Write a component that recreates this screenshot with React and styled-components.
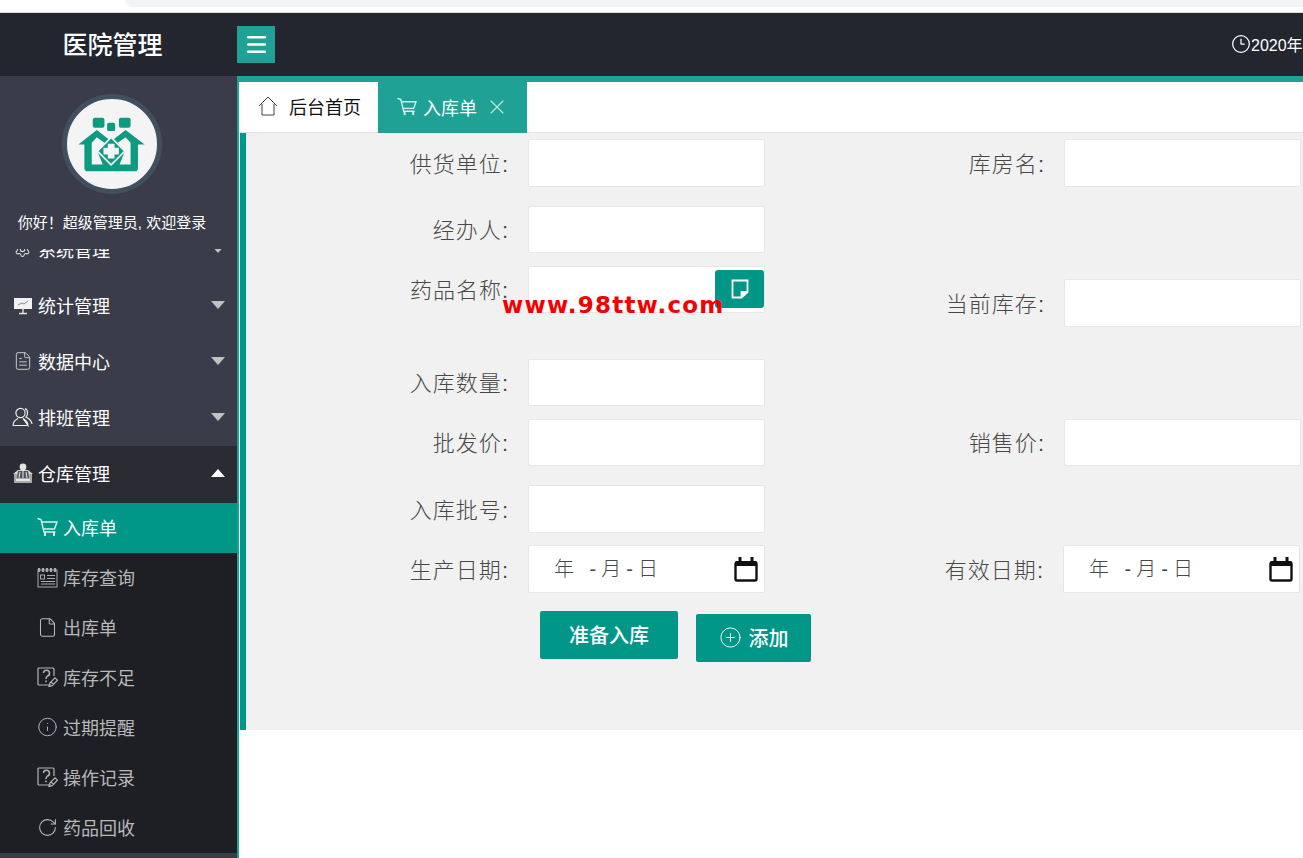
import styled, { createGlobalStyle } from "styled-components";
import { Clock3, File, FileText, Info, Menu as MenuIcon, RotateCw, Settings, X, CirclePlus } from "lucide-react";

const GlobalStyle = createGlobalStyle`
  html, body {
    margin: 0;
    padding: 0;
    height: 100%;
    overflow: hidden;
    background: #fff;
  }
  body {
    font-family: "Liberation Sans", "Noto Sans CJK SC", sans-serif;
  }
  * { box-sizing: border-box; }
`;

const Page = styled.div`
  width: 1303px;
  height: 858px;
  display: flex;
  flex-direction: column;
  overflow: hidden;
`;

const BrowserStrip = styled.div`
  height: 13px;
  flex: none;
  border-bottom: 1px solid #dcdcdc;
  background: #fff;
  padding-left: 125px;
`;

const BrowserStripShape = styled.div`
  height: 7px;
  background: #f1f3f4;
  border-bottom-left-radius: 9px;
`;

const Header = styled.header`
  height: 63px;
  flex: none;
  display: flex;
  align-items: flex-start;
  background: #23262f;
  color: #fff;
  overflow: hidden;
`;

const Brand = styled.div`
  width: 237px;
  flex: none;
  height: 63px;
  padding: 0 12px 4px 0;
  display: flex;
  align-items: center;
  justify-content: center;
  font-size: 25px;
  font-weight: 500;
`;

const MenuButton = styled.button`
  width: 38px;
  height: 37px;
  margin-top: 13px;
  flex: none;
  border: 0;
  padding: 0;
  display: flex;
  align-items: center;
  justify-content: center;
  background: #1fa295;
  color: #fff;
`;

const HeaderClock = styled.div`
  margin-left: 956px;
  margin-top: 19px;
  display: flex;
  align-items: center;
  flex: none;
  font-size: 16px;
  white-space: nowrap;
`;

const Body = styled.div`
  flex: 1;
  display: flex;
  min-height: 0;
`;

const Sidebar = styled.aside`
  width: 237px;
  flex: none;
  display: flex;
  flex-direction: column;
  background: #3a3d49;
  overflow: hidden;
`;

const Profile = styled.div`
  height: 173px;
  flex: none;
  display: flex;
  flex-direction: column;
  align-items: center;
  padding: 18px 14px 0 0;
  background: #3a3d49;
`;

const Avatar = styled.div`
  width: 100px;
  height: 100px;
  border-radius: 50%;
  border: 5px solid #41505f;
  background: #f4f4f4;
  display: flex;
  align-items: center;
  justify-content: center;
`;

const Welcome = styled.div`
  margin-top: 20px;
  padding-left: 1px;
  color: #fff;
  font-size: 15px;
  line-height: 18px;
  white-space: nowrap;
`;

const NavScroll = styled.nav`
  flex: 1;
  min-height: 0;
  overflow: hidden;
`;

const NavList = styled.div`
  margin-top: -27px;
`;

const NavGroup = styled.div`
  height: ${(p) => (p.$open ? 57 : 56)}px;
  display: flex;
  align-items: center;
  padding: 0 12px ${(p) => (p.$open ? 3 : 2)}px;
  gap: 5px;
  color: #fff;
  font-size: 18px;
  background: ${(p) => (p.$open ? "#2a2b33" : "transparent")};
`;

const GroupIcon = styled.span`
  width: 21px;
  height: 21px;
  flex: none;
  display: flex;
  align-items: center;
  justify-content: center;
`;

const Caret = styled.span`
  margin-left: auto;
  width: 0;
  height: 0;
  border-left: 7px solid transparent;
  border-right: 7px solid transparent;
  ${(p) =>
    p.$up
      ? "border-bottom: 8px solid #fff;"
      : "border-top: 8px solid #c2c2c2;"}
`;

const SubList = styled.div`
  background: #1e1f25;
`;

const SubItem = styled.div`
  height: 50px;
  display: flex;
  align-items: center;
  gap: 5px;
  padding: 0 0 2px 37px;
  font-size: 18px;
  color: ${(p) => (p.$active ? "#fff" : "#b8b8b8")};
  background: ${(p) => (p.$active ? "#009688" : "transparent")};
`;

const SubIcon = styled.span`
  width: 21px;
  height: 21px;
  flex: none;
  display: flex;
  align-items: center;
  justify-content: center;
`;

const Main = styled.main`
  flex: 1;
  min-width: 0;
  display: flex;
  flex-direction: column;
  background: #fff;
  border-left: 2px solid #1fa295;
  border-top: 6px solid #1fa295;
`;

const Tabs = styled.div`
  height: 51px;
  flex: none;
  display: flex;
  background: #fff;
  border-bottom: 1px solid #e2e2e2;
`;

const Tab = styled.div`
  height: ${(p) => (p.$active ? "51px" : "50px")};
  width: ${(p) => p.$width}px;
  padding: 0 0 2px ${(p) => p.$pad}px;
  display: flex;
  align-items: center;
  font-size: 18px;
  color: ${(p) => (p.$active ? "#fff" : "#111")};
  background: ${(p) => (p.$active ? "#1fa295" : "#fff")};
`;

const TabLabel = styled.span`
  margin-left: ${(p) => p.$gap}px;
`;

const CloseIcon = styled.span`
  margin-left: 8px;
  display: flex;
  color: #c3e6e1;
`;

const Content = styled.section`
  margin-left: 1px;
  height: 597px;
  flex: none;
  border-left: 6px solid #009688;
  background: #f1f1f1;
  position: relative;
  overflow: hidden;
`;

const Row = styled.div`
  display: flex;
  align-items: flex-start;
  margin-top: ${(p) => p.$top}px;
`;

const FieldCell = styled.div`
  display: flex;
  align-items: center;
  flex: none;
  margin-top: ${(p) => p.$top || 0}px;
`;

const Label = styled.label`
  width: ${(p) => p.$width}px;
  flex: none;
  padding: 0 19px 3px 0;
  text-align: right;
  font-size: 22px;
  font-weight: 300;
  letter-spacing: 1px;
  color: #484848;
  white-space: nowrap;
`;

const Input = styled.input`
  display: block;
  width: 237px;
  height: ${(p) => p.$h || 47}px;
  padding: 0 12px;
  border: 1px solid #e6e6e6;
  border-radius: 2px;
  background: #fff;
  outline: none;
`;

const PickerField = styled.div`
  position: relative;
  width: 237px;
`;

const PickerButton = styled.button`
  position: absolute;
  top: 4px;
  right: 1px;
  width: 49px;
  height: 38px;
  border: 0;
  border-radius: 3px;
  padding: 0;
  display: flex;
  align-items: center;
  justify-content: center;
  color: #fff;
  background: #009688;
`;

const DateField = styled.div`
  width: 237px;
  height: 48px;
  display: flex;
  align-items: center;
  padding: 0 6px 3px 25px;
  border: 1px solid #e6e6e6;
  border-radius: 2px;
  background: #fff;
  font-size: 20px;
  font-weight: 300;
  letter-spacing: 5px;
  color: #484848;
  white-space: pre;
`;

const CalendarIcon = styled.svg`
  margin: 3px 0 0 auto;
`;

const Actions = styled.div`
  display: flex;
  align-items: flex-start;
  gap: 18px;
  margin: 18px 0 0 294px;
`;

const Button = styled.button`
  height: 48px;
  width: ${(p) => p.$width}px;
  margin-top: ${(p) => p.$top || 0}px;
  border: 0;
  border-radius: 2px;
  padding: 0 0 2px;
  display: flex;
  align-items: center;
  justify-content: center;
  gap: 7px;
  font-family: inherit;
  font-size: 20px;
  font-weight: 500;
  color: #fff;
  background: #009688;
`;

const Watermark = styled.div`
  position: absolute;
  left: 256px;
  top: 159px;
  color: #f50000;
  font-family: "DejaVu Sans", sans-serif;
  font-size: 23px;
  font-weight: 700;
  letter-spacing: 1.2px;
  white-space: nowrap;
`;

function Logo() {
  return (
    <svg width="71" height="57" viewBox="50 70 212 170" fill="#0d9b7f">
      <rect x="100" y="75" width="35" height="30" rx="6" />
      <rect x="143" y="90" width="24" height="25" rx="5" />
      <rect x="178" y="75" width="35" height="30" rx="6" />
      <path d="M57 155 L112 112 L155 145 L198 112 L255 155 H235 V225 a10 10 0 0 1 -10 10 H85 a10 10 0 0 1 -10 -10 V155 Z" />
      <path d="M97 215 V150 L112 133 L135 150 L115 178 L130 215 Z" fill="#f4f4f4" />
      <path d="M213 215 V150 L198 133 L175 150 L195 178 L180 215 Z" fill="#f4f4f4" />
      <path d="M155 134 L196 175 L155 216 L114 175 Z" stroke="#f4f4f4" strokeWidth="5" strokeLinejoin="round" />
      <path d="M145 153 h20 v12 h13 v20 h-13 v12 h-20 v-12 h-13 v-20 h13 Z" fill="#f4f4f4" />
    </svg>
  );
}

function BoardIcon() {
  return (
    <svg width="20" height="19" viewBox="0 0 20 19">
      <rect x="1" y="2" width="18" height="11" fill="#f2f2f2" />
      <path d="M5 9 L9 7 L11 8 L15 5" stroke="#888" strokeWidth="1" fill="none" />
      <path d="M10 13 V17 M6 17.5 H14" stroke="#e8e8e8" strokeWidth="1.3" />
    </svg>
  );
}

function UsersIcon() {
  return (
    <svg width="21" height="20" viewBox="0 0 21 20" fill="none" stroke="#eee" strokeWidth="1.2">
      <circle cx="8.5" cy="6" r="4.6" />
      <path d="M1 18.5 C1 14 4 12.5 6 11.5 M11 11.5 C13 12.5 16 14 16 18.5 Z M1 18.5 H16" />
      <path d="M13 1.6 C16 2.5 16.4 8 14 10 C16 11 19.5 13 20 17" />
    </svg>
  );
}

function StoreIcon() {
  return (
    <svg width="20" height="21" viewBox="0 0 20 21">
      <rect x="1" y="11" width="18" height="9" fill="#a8a8a8" />
      <path d="M0 11 L5 7 H15 L20 11 Z" fill="#d8d8d8" />
      <circle cx="10" cy="4" r="3.4" fill="#e2e2e2" />
      <path d="M5 8 H15 L16 15 H4 Z" fill="#50525a" />
      <path d="M7 9 L6 15 M10 8 V15 M13 9 L14 15" stroke="#ddd" strokeWidth="1.1" />
      <rect x="3" y="16" width="14" height="2" fill="#e8e8e8" />
    </svg>
  );
}

function CartIcon({ size = 21, color = "#d9f3ef" }) {
  return (
    <svg width={size} height={size} viewBox="0 0 21 21" fill="none" stroke={color} strokeWidth="1.4">
      <path d="M0.5 1.5 L4 2.5 L7 15 H18.5" />
      <path d="M5 5 H20 L17.5 12 H6.5" />
      <path d="M8 15 V19 M17 15 V19" strokeWidth="2" />
    </svg>
  );
}

function CalendarListIcon() {
  return (
    <svg width="21" height="21" viewBox="0 0 21 21" fill="none" stroke="#aaa">
      <rect x="1" y="3" width="19" height="17" />
      <path d="M2 1 V5 M6 1 V5 M10 1 V5 M14 1 V5 M18 1 V5" strokeWidth="2.2" />
      <rect x="3.5" y="8" width="4" height="4" />
      <path d="M10 8.5 H18 M10 11.5 H18 M4 14.5 H18 M4 17 H18" />
    </svg>
  );
}

function HelpEditIcon() {
  return (
    <svg width="21" height="21" viewBox="0 0 21 21" fill="none" stroke="#b4b4b4" strokeWidth="1.2">
      <path d="M14 18 H2 a1 1 0 0 1 -1 -1 V2 a1 1 0 0 1 1 -1 H16 a1 1 0 0 1 1 1 V9" />
      <path d="M6.5 6 a3 3 0 1 1 4 3 C9.5 9.7 9 10.3 9 12" strokeWidth="1.5" />
      <path d="M9 13.6 V15.2" strokeWidth="1.5" />
      <path d="M12 19.5 L12.8 16 L18 10.8 L20.4 13.2 L15.2 18.6 Z M14 15 L16.6 17.4" />
    </svg>
  );
}

function HouseIcon() {
  return (
    <svg width="20" height="20" viewBox="0 0 20 20" fill="none" stroke="#444" strokeWidth="1">
      <path d="M1 10 L10 1 L19 10" />
      <path d="M4 8 V19 H16 V8" />
    </svg>
  );
}

function NoteIcon() {
  return (
    <svg width="18" height="20" viewBox="0 0 18 20" fill="none" stroke="#fff" strokeWidth="1.8">
      <path d="M1.5 1.5 H16.5 V13 L10.5 18.5 H1.5 Z" />
      <path d="M16.5 13 H10.5 V18.5" fill="#fff" />
    </svg>
  );
}

const groups = [
  { name: "统计管理", icon: <BoardIcon /> },
  { name: "数据中心", icon: <FileText size={20} strokeWidth={1.2} color="#c8c8c8" /> },
  { name: "排班管理", icon: <UsersIcon /> },
];

const subItems = [
  { name: "库存查询", icon: <CalendarListIcon /> },
  { name: "出库单", icon: <File size={21} strokeWidth={1.2} color="#b8b8b8" /> },
  { name: "库存不足", icon: <HelpEditIcon /> },
  { name: "过期提醒", icon: <Info size={24} strokeWidth={1.1} color="#b8b8b8" /> },
  { name: "操作记录", icon: <HelpEditIcon /> },
  { name: "药品回收", icon: <RotateCw size={23} strokeWidth={1.2} color="#b8b8b8" /> },
];

function Field({ label, width, height, top }) {
  return (
    <FieldCell $top={top}>
      <Label $width={width}>{label}:</Label>
      <Input $h={height} />
    </FieldCell>
  );
}

function DateInput({ label, width }) {
  return (
    <FieldCell>
      <Label $width={width}>{label}:</Label>
      <DateField>
        {"年 -月-日"}
        <CalendarIcon width="24" height="26" viewBox="0 0 24 26">
          <path d="M6 1 V5 M18 1 V5" stroke="#111" strokeWidth="3" />
          <path d="M3 6.5 H21 A1.5 1.5 0 0 1 22.5 8 V23 A1.5 1.5 0 0 1 21 24.5 H3 A1.5 1.5 0 0 1 1.5 23 V8 A1.5 1.5 0 0 1 3 6.5 Z" fill="none" stroke="#111" strokeWidth="2.4" />
          <rect x="1.5" y="5" width="21" height="5" fill="#111" />
        </CalendarIcon>
      </DateField>
    </FieldCell>
  );
}

export default function App() {
  return (
    <>
      <GlobalStyle />
      <Page>
        <BrowserStrip>
          <BrowserStripShape />
        </BrowserStrip>
        <Header>
          <Brand>医院管理</Brand>
          <MenuButton>
            <MenuIcon size={25} strokeWidth={2.3} />
          </MenuButton>
          <HeaderClock>
            <Clock3 size={20} strokeWidth={1.5} />
            2020年
          </HeaderClock>
        </Header>
        <Body>
          <Sidebar>
            <Profile>
              <Avatar>
                <Logo />
              </Avatar>
              <Welcome>你好！超级管理员, 欢迎登录</Welcome>
            </Profile>
            <NavScroll>
              <NavList>
                <NavGroup>
                  <GroupIcon>
                    <Settings size={17} strokeWidth={1.5} color="#ddd" />
                  </GroupIcon>
                  系统管理
                  <Caret />
                </NavGroup>
                {groups.map((g) => (
                  <NavGroup key={g.name}>
                    <GroupIcon>{g.icon}</GroupIcon>
                    {g.name}
                    <Caret />
                  </NavGroup>
                ))}
                <NavGroup $open>
                  <GroupIcon>
                    <StoreIcon />
                  </GroupIcon>
                  仓库管理
                  <Caret $up />
                </NavGroup>
                <SubList>
                  <SubItem $active>
                    <SubIcon>
                      <CartIcon />
                    </SubIcon>
                    入库单
                  </SubItem>
                  {subItems.map((s) => (
                    <SubItem key={s.name}>
                      <SubIcon>{s.icon}</SubIcon>
                      {s.name}
                    </SubItem>
                  ))}
                </SubList>
              </NavList>
            </NavScroll>
          </Sidebar>
          <Main>
            <Tabs>
              <Tab $width={139} $pad={19}>
                <HouseIcon />
                <TabLabel $gap={11}>后台首页</TabLabel>
              </Tab>
              <Tab $active $width={149} $pad={19}>
                <CartIcon size={20} />
                <TabLabel $gap={6}>入库单</TabLabel>
                <CloseIcon>
                  <X size={24} strokeWidth={1.1} />
                </CloseIcon>
              </Tab>
            </Tabs>
            <Content>
              <Row $top={6}>
                <Field label="供货单位" width={282} height={48} />
                <Field label="库房名" width={299} height={48} />
              </Row>
              <Row $top={19}>
                <Field label="经办人" width={282} />
              </Row>
              <Row $top={13}>
                <FieldCell>
                  <Label $width={282}>药品名称:</Label>
                  <PickerField>
                    <Input />
                    <PickerButton>
                      <NoteIcon />
                    </PickerButton>
                  </PickerField>
                </FieldCell>
                <Field label="当前库存" width={299} height={48} top={13} />
              </Row>
              <Row $top={32}>
                <Field label="入库数量" width={282} />
              </Row>
              <Row $top={13}>
                <Field label="批发价" width={282} />
                <Field label="销售价" width={299} />
              </Row>
              <Row $top={19}>
                <Field label="入库批号" width={282} height={48} />
              </Row>
              <Row $top={12}>
                <DateInput label="生产日期" width={282} />
                <DateInput label="有效日期" width={298} />
              </Row>
              <Actions>
                <Button $width={138}>准备入库</Button>
                <Button $width={115} $top={3}>
                  <CirclePlus size={23} strokeWidth={1} />
                  添加
                </Button>
              </Actions>
              <Watermark>www.98ttw.com</Watermark>
            </Content>
          </Main>
        </Body>
      </Page>
    </>
  );
}
